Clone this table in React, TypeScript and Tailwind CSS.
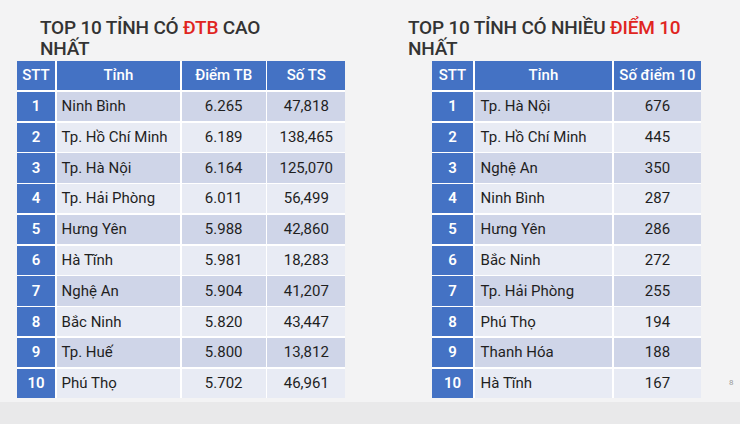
const left = [
  ["1", "Ninh Bình", "6.265", "47,818"],
  ["2", "Tp. Hồ Chí Minh", "6.189", "138,465"],
  ["3", "Tp. Hà Nội", "6.164", "125,070"],
  ["4", "Tp. Hải Phòng", "6.011", "56,499"],
  ["5", "Hưng Yên", "5.988", "42,860"],
  ["6", "Hà Tĩnh", "5.981", "18,283"],
  ["7", "Nghệ An", "5.904", "41,207"],
  ["8", "Bắc Ninh", "5.820", "43,447"],
  ["9", "Tp. Huế", "5.800", "13,812"],
  ["10", "Phú Thọ", "5.702", "46,961"],
];

const right = [
  ["1", "Tp. Hà Nội", "676"],
  ["2", "Tp. Hồ Chí Minh", "445"],
  ["3", "Nghệ An", "350"],
  ["4", "Ninh Bình", "287"],
  ["5", "Hưng Yên", "286"],
  ["6", "Bắc Ninh", "272"],
  ["7", "Tp. Hải Phòng", "255"],
  ["8", "Phú Thọ", "194"],
  ["9", "Thanh Hóa", "188"],
  ["10", "Hà Tĩnh", "167"],
];

const head = "bg-[#4472c4] text-white font-medium flex items-center justify-center";
const stt = "bg-[#4472c4] text-white font-semibold flex items-center justify-center";

const App: React.FC = () => {
  return (
    <div className="w-[740px] h-[424px] bg-[#f3f3f4] flex flex-col font-['Roboto',sans-serif] text-[#1f1f1f]">
      <div className="h-[402px] flex">
        {/* LEFT */}
        <div className="w-[390px] pl-[17px] pt-[17px]">
          <h2 className="pl-[23px] text-[19px] leading-[21px] font-medium text-[#333] tracking-[-0.2px]">
            TOP 10 TỈNH CÓ <span className="text-[#e0251f]">ĐTB</span> CAO
            <br />
            NHẤT
          </h2>
          <div className="mt-[2px] w-[328px] grid grid-cols-[38px_123.5px_84px_78px] auto-rows-[29.2px] gap-[1.6px] bg-white text-[15px]">
            <div className={head}>STT</div>
            <div className={head}>Tỉnh</div>
            <div className={head}>Điểm TB</div>
            <div className={head}>Số TS</div>
            {left.map((r, i) => {
              const bg = i % 2 === 0 ? "bg-[#cfd5e8]" : "bg-[#e8ebf4]";
              return [
                <div key={r[0] + "a"} className={stt}>{r[0]}</div>,
                <div key={r[0] + "b"} className={`${bg} flex items-center pl-[5px]`}>{r[1]}</div>,
                <div key={r[0] + "c"} className={`${bg} flex items-center justify-center`}>{r[2]}</div>,
                <div key={r[0] + "d"} className={`${bg} flex items-center justify-center`}>{r[3]}</div>,
              ];
            })}
          </div>
        </div>

        {/* RIGHT */}
        <div className="flex-1 pl-[18px] pt-[17px] relative">
          <h2 className="text-[19px] leading-[21px] font-medium text-[#333] tracking-[-0.2px]">
            TOP 10 TỈNH CÓ NHIỀU <span className="text-[#e0251f]">ĐIỂM 10</span>
            <br />
            NHẤT
          </h2>
          <div className="mt-[2px] ml-[24px] w-[269px] grid grid-cols-[41px_137.5px_87.5px] auto-rows-[29.2px] gap-[1.6px] bg-white text-[15px]">
            <div className={head}>STT</div>
            <div className={head}>Tỉnh</div>
            <div className={head}>Số điểm 10</div>
            {right.map((r, i) => {
              const bg = i % 2 === 0 ? "bg-[#cfd5e8]" : "bg-[#e8ebf4]";
              return [
                <div key={r[0] + "a"} className={stt}>{r[0]}</div>,
                <div key={r[0] + "b"} className={`${bg} flex items-center pl-[6px]`}>{r[1]}</div>,
                <div key={r[0] + "c"} className={`${bg} flex items-center justify-center`}>{r[2]}</div>,
              ];
            })}
          </div>
          <span className="absolute left-[339px] top-[377px] text-[8px] text-[#9a9a9a]">8</span>
        </div>
      </div>
      <div className="flex-1 bg-[#e9e9ea]" />
    </div>
  );
};

export default App;
